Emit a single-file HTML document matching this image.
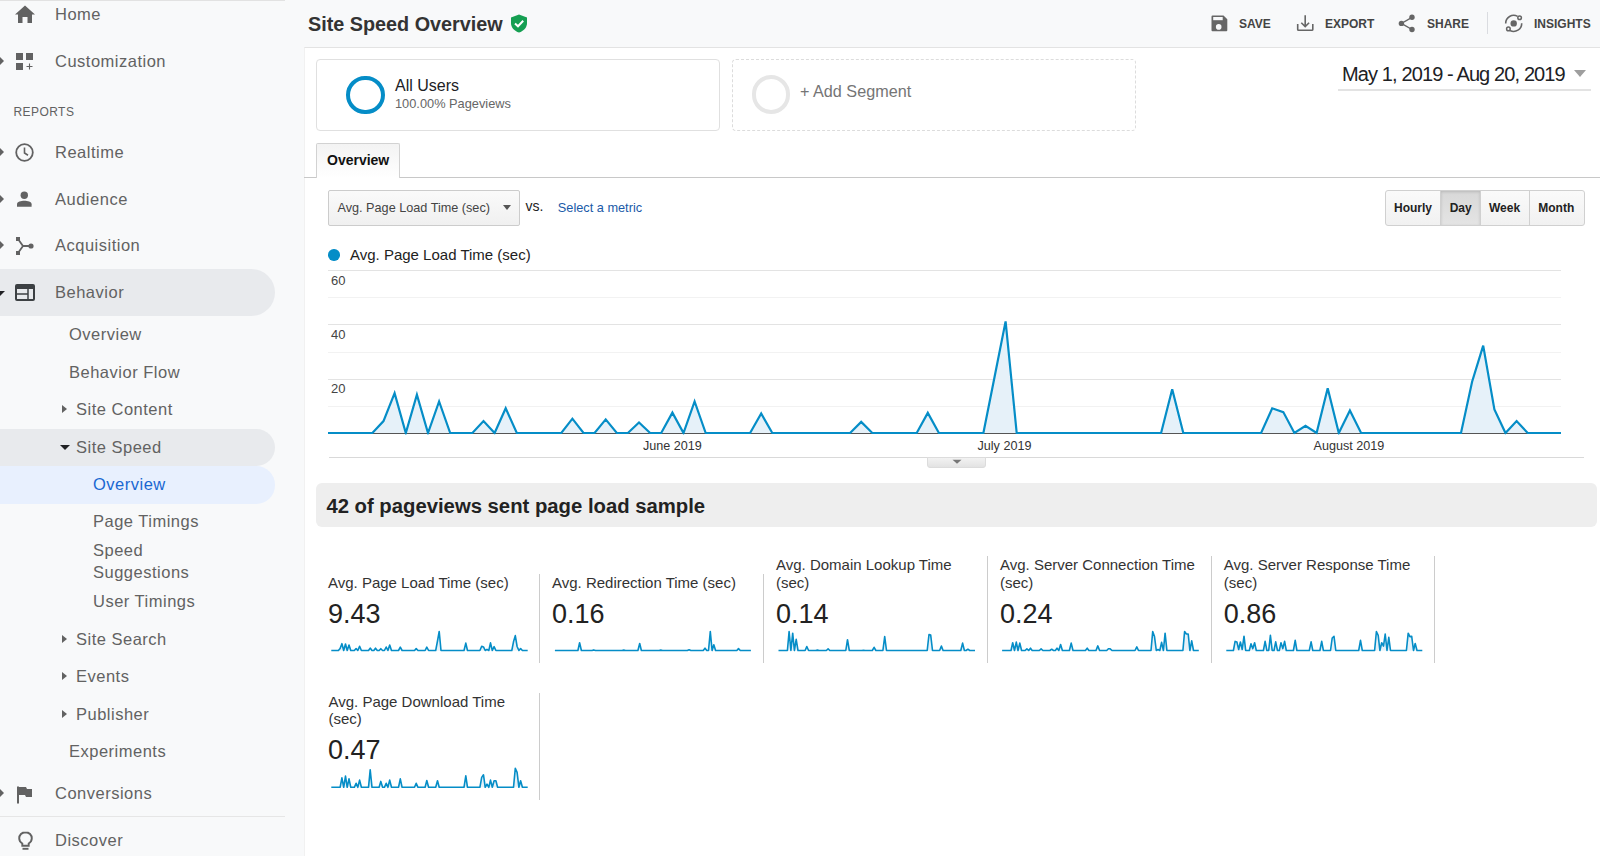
<!DOCTYPE html>
<html><head><meta charset="utf-8">
<style>
*{margin:0;padding:0;box-sizing:border-box}
html,body{width:1600px;height:856px;overflow:hidden;background:#f8f9fa;font-family:"Liberation Sans",sans-serif;position:relative}
.a{position:absolute;white-space:nowrap;line-height:1}
.nav{color:#626262;font-size:16.5px;letter-spacing:0.5px}
.sub{color:#626262;font-size:16.5px;letter-spacing:0.5px}
.arr{position:absolute;width:0;height:0;border-top:4.6px solid transparent;border-bottom:4.6px solid transparent;border-left:5.3px solid #626262}
.arr0{position:absolute;width:0;height:0;border-top:6.3px solid transparent;border-bottom:6.3px solid transparent;border-left:6px solid #626262}
.darr{position:absolute;width:0;height:0;border-left:5px solid transparent;border-right:5px solid transparent;border-top:5px solid #626262}
.ico{position:absolute}
#main{position:absolute;left:304px;top:47px;width:1296px;height:809px;background:#fff;border-top:1px solid #e3e3e3;border-left:1px solid #f1f1f1}
.tb{color:#444;font-size:12px;font-weight:bold}
.mt{color:#333;font-size:15px}
.mv{color:#222;font-size:27px}
.vd{position:absolute;width:1px;background:#ccc}
</style></head><body>
<!-- SIDEBAR -->
<div class="a" style="left:0;top:0;width:285px;height:1px;background:#e2e2e2"></div>
<svg class="ico" style="left:14px;top:5px" width="22" height="19" viewBox="0 0 22 19"><path d="M11 0.5 L21 9.5 H18 V18 H13.5 V12 H8.5 V18 H4 V9.5 H1 Z" fill="#626262"/></svg>
<div class="a nav" style="left:55px;top:5.8px">Home</div>

<div class="arr0" style="left:-2.3px;top:54.9px"></div>
<svg class="ico" style="left:16px;top:53px" width="18" height="18" viewBox="0 0 18 18"><rect x="0" y="0" width="7" height="7" fill="#626262"/><rect x="10" y="0" width="7" height="7" fill="#626262"/><rect x="0" y="10" width="7" height="7" fill="#626262"/><path d="M13.5 10.5v6M10.5 13.5h6" stroke="#626262" stroke-width="1.1"/></svg>
<div class="a nav" style="left:55px;top:52.9px">Customization</div>

<div class="a" style="left:13.4px;top:105.7px;color:#626262;font-size:12px;letter-spacing:0.45px">REPORTS</div>

<div class="arr0" style="left:-2.3px;top:146.2px"></div>
<svg class="ico" style="left:15px;top:143px" width="19" height="19" viewBox="0 0 19 19"><circle cx="9.5" cy="9.5" r="8.3" fill="none" stroke="#626262" stroke-width="1.8"/><path d="M9.5 4.5V10l3.5 2.2" fill="none" stroke="#626262" stroke-width="1.6"/></svg>
<div class="a nav" style="left:55px;top:144px">Realtime</div>

<div class="arr0" style="left:-2.3px;top:193.0px"></div>
<svg class="ico" style="left:16px;top:190px" width="18" height="18" viewBox="0 0 18 18"><circle cx="8.3" cy="5.2" r="3.7" fill="#626262"/><path d="M1 16.8 V14.2 C1 11.6 5 10.8 8.3 10.8 C11.6 10.8 15.6 11.6 15.6 14.2 V16.8 Z" fill="#626262"/></svg>
<div class="a nav" style="left:55px;top:190.8px">Audience</div>

<div class="arr0" style="left:-2.3px;top:239.4px"></div>
<svg class="ico" style="left:16px;top:237px" width="18" height="18" viewBox="0 0 18 18"><rect x="0" y="0" width="4" height="4" fill="#626262"/><rect x="0" y="14" width="4" height="4" fill="#626262"/><circle cx="15" cy="9" r="2.6" fill="#626262"/><path d="M2 2 L7 9 H15 M7 9 L2 16" fill="none" stroke="#626262" stroke-width="1.8"/></svg>
<div class="a nav" style="left:55px;top:237.2px">Acquisition</div>

<div class="a" style="left:0;top:269px;width:275px;height:47px;background:#e8eaed;border-radius:0 23.5px 23.5px 0"></div>
<div class="darr" style="left:-4.7px;top:290.5px;border-top-color:#202124"></div>
<svg class="ico" style="left:15px;top:284px" width="20" height="17" viewBox="0 0 20 17"><rect x="1" y="1" width="18" height="15" rx="1" fill="none" stroke="#3c4043" stroke-width="2"/><rect x="1" y="1" width="18" height="4" fill="#3c4043"/><path d="M1 10h12M13 5v11" stroke="#3c4043" stroke-width="1.5"/></svg>
<div class="a nav" style="left:55px;top:284.2px">Behavior</div>

<div class="a sub" style="left:69px;top:326px">Overview</div>
<div class="a sub" style="left:69px;top:363.5px">Behavior Flow</div>
<div class="arr" style="left:62px;top:405.4px"></div>
<div class="a sub" style="left:76px;top:401px">Site Content</div>

<div class="a" style="left:0;top:428.8px;width:275px;height:37.4px;background:#e8eaed;border-radius:0 18.7px 18.7px 0"></div>
<div class="darr" style="left:59.5px;top:444.5px;border-top-color:#202124"></div>
<div class="a sub" style="left:76px;top:438.5px">Site Speed</div>

<div class="a" style="left:0;top:466.2px;width:275px;height:37.4px;background:#e8f0fe;border-radius:0 18.7px 18.7px 0"></div>
<div class="a sub" style="left:93px;top:475.8px;color:#1967d2">Overview</div>
<div class="a sub" style="left:93px;top:512.9px">Page Timings</div>
<div class="a sub" style="left:93px;top:542.3px">Speed</div>
<div class="a sub" style="left:93px;top:563.5px">Suggestions</div>
<div class="a sub" style="left:93px;top:592.9px">User Timings</div>
<div class="arr" style="left:62px;top:634.9px"></div>
<div class="a sub" style="left:76px;top:630.5px">Site Search</div>
<div class="arr" style="left:62px;top:672.1px"></div>
<div class="a sub" style="left:76px;top:667.7px">Events</div>
<div class="arr" style="left:62px;top:710.0px"></div>
<div class="a sub" style="left:76px;top:705.6px">Publisher</div>
<div class="a sub" style="left:69px;top:742.7px">Experiments</div>

<div class="arr0" style="left:-2.3px;top:787.2px"></div>
<svg class="ico" style="left:17px;top:786px" width="16" height="18" viewBox="0 0 16 18"><path d="M1 0.5 V17.5" stroke="#626262" stroke-width="2"/><path d="M2 1 H9 L10 3 H15 V11 H9 L8 9 H2 Z" fill="#626262"/></svg>
<div class="a nav" style="left:55px;top:785px">Conversions</div>
<div class="a" style="left:0;top:815.5px;width:285px;height:1.5px;background:#e6e6e6"></div>
<svg class="ico" style="left:17.5px;top:831px" width="15" height="20" viewBox="0 0 15 20"><path d="M7.5 1.2 C3.8 1.2 1.2 4 1.2 7.3 C1.2 9.6 2.4 11.4 4.3 12.5 V14.8 H10.7 V12.5 C12.6 11.4 13.8 9.6 13.8 7.3 C13.8 4 11.2 1.2 7.5 1.2 Z" fill="none" stroke="#626262" stroke-width="1.9"/><path d="M4.5 17.8 H10.5" stroke="#626262" stroke-width="1.9"/></svg>
<div class="a nav" style="left:55px;top:832px">Discover</div>

<!-- HEADER -->
<div class="a" style="left:308px;top:14.8px;font-size:19.8px;font-weight:bold;color:#333">Site Speed Overview</div>
<svg class="ico" style="left:510px;top:14px" width="18" height="19" viewBox="0 0 18 19"><path d="M9 0.5 L17 3.5 V9 C17 13.5 13.6 17.2 9 18.5 C4.4 17.2 1 13.5 1 9 V3.5 Z" fill="#159f52"/><path d="M5 9.5 L8 12.3 L13.2 6.8" fill="none" stroke="#fff" stroke-width="2"/></svg>

<svg class="ico" style="left:1210.5px;top:15px" width="17" height="17" viewBox="0 0 17 17"><path d="M0.5 1.5 A1 1 0 0 1 1.5 0.5 H12.5 L16.3 4.3 V15.3 A1 1 0 0 1 15.3 16.3 H1.5 A1 1 0 0 1 0.5 15.3 Z" fill="#666"/><rect x="2.2" y="2" width="9.5" height="3.2" fill="#f8f9fa"/><circle cx="7.7" cy="11.9" r="2.8" fill="#f8f9fa"/></svg>
<div class="a tb" style="left:1239px;top:17.75px">SAVE</div>
<svg class="ico" style="left:1296px;top:14px" width="18" height="18" viewBox="0 0 18 18"><path d="M1.7 10 V15.4 Q1.7 16.3 2.6 16.3 H15.9 Q16.8 16.3 16.8 15.4 V10" fill="none" stroke="#666" stroke-width="1.6"/><path d="M9.2 1.3 V12.5 M5.3 8.7 L9.2 12.6 L13.1 8.7" fill="none" stroke="#666" stroke-width="1.6"/></svg>
<div class="a tb" style="left:1325px;top:17.75px">EXPORT</div>
<svg class="ico" style="left:1397px;top:14px" width="19" height="19" viewBox="0 0 19 19"><circle cx="15" cy="3.3" r="2.7" fill="#666"/><circle cx="4.4" cy="9.4" r="2.7" fill="#666"/><circle cx="15" cy="15.5" r="2.7" fill="#666"/><path d="M15 3.3 L4.4 9.4 L15 15.5" fill="none" stroke="#666" stroke-width="1.4"/></svg>
<div class="a tb" style="left:1427px;top:17.75px">SHARE</div>
<div class="a" style="left:1487px;top:12px;width:1px;height:22px;background:#dadce0"></div>
<svg class="ico" style="left:1504px;top:14px" width="20" height="19" viewBox="0 0 20 19"><circle cx="9.7" cy="9.4" r="3.2" fill="#666"/><path d="M1.7 9.6 A8 8 0 0 1 13.6 2.4" fill="none" stroke="#666" stroke-width="1.6"/><path d="M17.7 9.2 A8 8 0 0 1 6 16.5" fill="none" stroke="#666" stroke-width="1.6"/><circle cx="15.6" cy="3.7" r="1.8" fill="none" stroke="#666" stroke-width="1.5"/><circle cx="4.4" cy="14.9" r="1.8" fill="none" stroke="#666" stroke-width="1.5"/></svg>
<div class="a tb" style="left:1534px;top:17.75px">INSIGHTS</div>

<div id="main"></div>

<!-- SEGMENTS -->
<div class="a" style="left:316px;top:59px;width:404px;height:72px;border:1px solid #e0e0e0;border-radius:4px;background:#fff"></div>
<div class="a" style="left:346px;top:75.5px;width:38.5px;height:38.5px;border:4.8px solid #058dc7;border-radius:50%"></div>
<div class="a" style="left:395px;top:77.7px;font-size:16px;color:#202124">All Users</div>
<div class="a" style="left:395px;top:97.7px;font-size:12.8px;color:#666">100.00% Pageviews</div>

<div class="a" style="left:732px;top:59px;width:404px;height:72px;border:1px dashed #dcdcdc;border-radius:4px"></div>
<div class="a" style="left:751.5px;top:75px;width:38.5px;height:38.5px;border:4.8px solid #e6e6e6;border-radius:50%"></div>
<div class="a" style="left:800px;top:83px;font-size:16.2px;color:#757575">+ Add Segment</div>

<div class="a" style="left:1342px;top:64.4px;font-size:20px;letter-spacing:-0.88px;color:#202124">May 1, 2019 - Aug 20, 2019</div>
<div class="a" style="left:1574px;top:70px;width:0;height:0;border-left:6.5px solid transparent;border-right:6.5px solid transparent;border-top:7px solid #9e9e9e"></div>
<div class="a" style="left:1338px;top:88.5px;width:253px;height:2px;background:#e3e3e3"></div>

<!-- TAB -->
<div class="a" style="left:304px;top:177px;width:1296px;height:1px;background:#c8c8c8"></div>
<div class="a" style="left:316px;top:143px;width:84px;height:35px;border:1px solid #d2d2d2;border-bottom:none;border-radius:2px 2px 0 0;background:linear-gradient(#f3f3f3,#fff)"></div>
<div class="a" style="left:327px;top:153px;font-size:14px;font-weight:bold;color:#111">Overview</div>

<!-- CONTROLS -->
<div class="a" style="left:328px;top:190px;width:192px;height:36px;border:1px solid #ccc;border-radius:2px;background:linear-gradient(#fafafa,#f0f0f0)"></div>
<div class="a" style="left:337.5px;top:201.8px;font-size:12.66px;color:#444">Avg. Page Load Time (sec)</div>
<div class="a" style="left:502.5px;top:205px;width:0;height:0;border-left:4px solid transparent;border-right:4px solid transparent;border-top:5px solid #555"></div>
<div class="a" style="left:525.5px;top:199px;font-size:14px;color:#222">vs.</div>
<div class="a" style="left:557.8px;top:201.8px;font-size:12.75px;color:#1a5aa8">Select a metric</div>

<div class="a" style="left:1385px;top:190px;width:200px;height:36px;border:1px solid #d0d0d0;border-radius:3px;background:linear-gradient(#fafafa,#f1f1f1)"></div>
<div class="a" style="left:1440.5px;top:191px;width:39px;height:34px;background:linear-gradient(#d8d8d8,#e4e4e4);box-shadow:inset 0 1px 3px rgba(0,0,0,0.15)"></div>
<div class="a" style="left:1440px;top:191px;width:1px;height:34px;background:#d0d0d0"></div>
<div class="a" style="left:1479.5px;top:191px;width:1px;height:34px;background:#d0d0d0"></div>
<div class="a" style="left:1529px;top:191px;width:1px;height:34px;background:#d0d0d0"></div>
<div class="a" style="left:1394px;top:202.3px;font-size:12px;font-weight:bold;color:#222">Hourly</div>
<div class="a" style="left:1449.7px;top:202.3px;font-size:12px;font-weight:bold;color:#222">Day</div>
<div class="a" style="left:1489px;top:202.3px;font-size:12px;font-weight:bold;color:#222">Week</div>
<div class="a" style="left:1538.3px;top:202.3px;font-size:12px;font-weight:bold;color:#222">Month</div>

<!-- CHART -->
<div class="a" style="left:328px;top:249px;width:11.5px;height:11.5px;border-radius:50%;background:#058dc7"></div>
<div class="a" style="left:350px;top:247.4px;font-size:15px;color:#222">Avg. Page Load Time (sec)</div>
<svg class="ico" style="left:0;top:0" width="1600" height="856" viewBox="0 0 1600 856">
<g stroke-width="1" shape-rendering="crispEdges">
<path d="M328 270.5H1561M328 324.5H1561M328 379.5H1561" stroke="#e3e3e3"/>
<path d="M328 297.5H1561M328 352.5H1561M328 406.5H1561" stroke="#f2f2f2"/>
<path d="M329 457.5H1584" stroke="#d9d9d9"/>
</g>
<path d="M328.0,433.0 L339.1,433.0 L350.2,433.0 L361.3,433.0 L372.4,433.0 L383.5,421.1 L394.6,393.1 L405.8,433.0 L416.9,394.7 L428.0,433.0 L439.1,401.5 L450.2,433.0 L461.3,433.0 L472.4,433.0 L483.5,421.1 L494.6,433.0 L505.7,408.3 L516.8,433.0 L527.9,433.0 L539.1,433.0 L550.2,433.0 L561.3,433.0 L572.4,418.7 L583.5,433.0 L594.6,433.0 L605.7,419.4 L616.8,433.0 L627.9,433.0 L639.0,422.4 L650.1,433.0 L661.2,433.0 L672.4,412.6 L683.5,433.0 L694.6,401.5 L705.7,433.0 L716.8,433.0 L727.9,433.0 L739.0,433.0 L750.1,433.0 L761.2,413.5 L772.3,433.0 L783.4,433.0 L794.5,433.0 L805.6,433.0 L816.8,433.0 L827.9,433.0 L839.0,433.0 L850.1,433.0 L861.2,421.9 L872.3,433.0 L883.4,433.0 L894.5,433.0 L905.6,433.0 L916.7,433.0 L927.8,412.9 L938.9,433.0 L950.1,433.0 L961.2,433.0 L972.3,433.0 L983.4,433.0 L994.5,377.3 L1005.6,321.4 L1016.7,433.0 L1027.8,433.0 L1038.9,433.0 L1050.0,433.0 L1061.1,433.0 L1072.2,433.0 L1083.4,433.0 L1094.5,433.0 L1105.6,433.0 L1116.7,433.0 L1127.8,433.0 L1138.9,433.0 L1150.0,433.0 L1161.1,433.0 L1172.2,389.3 L1183.3,433.0 L1194.4,433.0 L1205.5,433.0 L1216.6,433.0 L1227.8,433.0 L1238.9,433.0 L1250.0,433.0 L1261.1,433.0 L1272.2,408.3 L1283.3,412.1 L1294.4,433.0 L1305.5,425.9 L1316.6,433.0 L1327.7,388.2 L1338.8,433.0 L1349.9,410.5 L1361.1,433.0 L1372.2,433.0 L1383.3,433.0 L1394.4,433.0 L1405.5,433.0 L1416.6,433.0 L1427.7,433.0 L1438.8,433.0 L1449.9,433.0 L1461.0,433.0 L1472.1,381.7 L1483.2,345.6 L1494.4,409.4 L1505.5,433.0 L1516.6,421.1 L1527.7,433.0 L1538.8,433.0 L1549.9,433.0 L1561.0,433.0 L1561.0,433.0 L328.0,433.0 Z" fill="#e6f1f9"/>
<path d="M328 433.5H1561" stroke="#555" stroke-width="1"/>
<clipPath id="cl"><rect x="300" y="250" width="1300" height="184.6"/></clipPath><path clip-path="url(#cl)" d="M328.0,433.0 L339.1,433.0 L350.2,433.0 L361.3,433.0 L372.4,433.0 L383.5,421.1 L394.6,393.1 L405.8,433.0 L416.9,394.7 L428.0,433.0 L439.1,401.5 L450.2,433.0 L461.3,433.0 L472.4,433.0 L483.5,421.1 L494.6,433.0 L505.7,408.3 L516.8,433.0 L527.9,433.0 L539.1,433.0 L550.2,433.0 L561.3,433.0 L572.4,418.7 L583.5,433.0 L594.6,433.0 L605.7,419.4 L616.8,433.0 L627.9,433.0 L639.0,422.4 L650.1,433.0 L661.2,433.0 L672.4,412.6 L683.5,433.0 L694.6,401.5 L705.7,433.0 L716.8,433.0 L727.9,433.0 L739.0,433.0 L750.1,433.0 L761.2,413.5 L772.3,433.0 L783.4,433.0 L794.5,433.0 L805.6,433.0 L816.8,433.0 L827.9,433.0 L839.0,433.0 L850.1,433.0 L861.2,421.9 L872.3,433.0 L883.4,433.0 L894.5,433.0 L905.6,433.0 L916.7,433.0 L927.8,412.9 L938.9,433.0 L950.1,433.0 L961.2,433.0 L972.3,433.0 L983.4,433.0 L994.5,377.3 L1005.6,321.4 L1016.7,433.0 L1027.8,433.0 L1038.9,433.0 L1050.0,433.0 L1061.1,433.0 L1072.2,433.0 L1083.4,433.0 L1094.5,433.0 L1105.6,433.0 L1116.7,433.0 L1127.8,433.0 L1138.9,433.0 L1150.0,433.0 L1161.1,433.0 L1172.2,389.3 L1183.3,433.0 L1194.4,433.0 L1205.5,433.0 L1216.6,433.0 L1227.8,433.0 L1238.9,433.0 L1250.0,433.0 L1261.1,433.0 L1272.2,408.3 L1283.3,412.1 L1294.4,433.0 L1305.5,425.9 L1316.6,433.0 L1327.7,388.2 L1338.8,433.0 L1349.9,410.5 L1361.1,433.0 L1372.2,433.0 L1383.3,433.0 L1394.4,433.0 L1405.5,433.0 L1416.6,433.0 L1427.7,433.0 L1438.8,433.0 L1449.9,433.0 L1461.0,433.0 L1472.1,381.7 L1483.2,345.6 L1494.4,409.4 L1505.5,433.0 L1516.6,421.1 L1527.7,433.0 L1538.8,433.0 L1549.9,433.0 L1561.0,433.0" fill="none" stroke="#058dc7" stroke-width="2.2" stroke-linejoin="miter" stroke-miterlimit="4"/>
<defs><linearGradient id="hg" x1="0" y1="0" x2="0" y2="1"><stop offset="0" stop-color="#f3f3f3"/><stop offset="1" stop-color="#e2e2e2"/></linearGradient></defs><path d="M927.5 457.5 H985.5 V465 Q985.5 467.5 983 467.5 H930 Q927.5 467.5 927.5 465 Z" fill="url(#hg)" stroke="#dcdcdc" stroke-width="1"/>
<path d="M952.5 459.8 H961.5 L957 463.8 Z" fill="#777"/>
<path d="M331.3,650.5 L333.1,650.5 L334.8,650.5 L336.6,650.5 L338.4,650.5 L340.1,648.5 L341.9,643.7 L343.7,650.5 L345.5,644.0 L347.2,650.5 L349.0,645.1 L350.8,650.5 L352.5,650.5 L354.3,650.5 L356.1,648.5 L357.8,650.5 L359.6,646.3 L361.4,650.5 L363.1,650.5 L364.9,650.5 L366.7,650.5 L368.5,650.5 L370.2,648.1 L372.0,650.5 L373.8,650.5 L375.5,648.2 L377.3,650.5 L379.1,650.5 L380.8,648.7 L382.6,650.5 L384.4,650.5 L386.2,647.0 L387.9,650.5 L389.7,645.1 L391.5,650.5 L393.2,650.5 L395.0,650.5 L396.8,650.5 L398.5,650.5 L400.3,647.2 L402.1,650.5 L403.8,650.5 L405.6,650.5 L407.4,650.5 L409.2,650.5 L410.9,650.5 L412.7,650.5 L414.5,650.5 L416.2,648.6 L418.0,650.5 L419.8,650.5 L421.5,650.5 L423.3,650.5 L425.1,650.5 L426.8,647.1 L428.6,650.5 L430.4,650.5 L432.2,650.5 L433.9,650.5 L435.7,650.5 L437.5,641.0 L439.2,631.5 L441.0,650.5 L442.8,650.5 L444.5,650.5 L446.3,650.5 L448.1,650.5 L449.8,650.5 L451.6,650.5 L453.4,650.5 L455.2,650.5 L456.9,650.5 L458.7,650.5 L460.5,650.5 L462.2,650.5 L464.0,650.5 L465.8,643.1 L467.5,650.5 L469.3,650.5 L471.1,650.5 L472.8,650.5 L474.6,650.5 L476.4,650.5 L478.2,650.5 L479.9,650.5 L481.7,646.3 L483.5,646.9 L485.2,650.5 L487.0,649.3 L488.8,650.5 L490.5,642.9 L492.3,650.5 L494.1,646.7 L495.9,650.5 L497.6,650.5 L499.4,650.5 L501.2,650.5 L502.9,650.5 L504.7,650.5 L506.5,650.5 L508.2,650.5 L510.0,650.5 L511.8,650.5 L513.5,641.8 L515.3,635.6 L517.1,646.5 L518.9,650.5 L520.6,648.5 L522.4,650.5 L524.2,650.5 L525.9,650.5 L527.7,650.5 L527.7,650.5 L331.3,650.5 Z" fill="#e6f1f8"/><path d="M331.3,650.5 L333.1,650.5 L334.8,650.5 L336.6,650.5 L338.4,650.5 L340.1,648.5 L341.9,643.7 L343.7,650.5 L345.5,644.0 L347.2,650.5 L349.0,645.1 L350.8,650.5 L352.5,650.5 L354.3,650.5 L356.1,648.5 L357.8,650.5 L359.6,646.3 L361.4,650.5 L363.1,650.5 L364.9,650.5 L366.7,650.5 L368.5,650.5 L370.2,648.1 L372.0,650.5 L373.8,650.5 L375.5,648.2 L377.3,650.5 L379.1,650.5 L380.8,648.7 L382.6,650.5 L384.4,650.5 L386.2,647.0 L387.9,650.5 L389.7,645.1 L391.5,650.5 L393.2,650.5 L395.0,650.5 L396.8,650.5 L398.5,650.5 L400.3,647.2 L402.1,650.5 L403.8,650.5 L405.6,650.5 L407.4,650.5 L409.2,650.5 L410.9,650.5 L412.7,650.5 L414.5,650.5 L416.2,648.6 L418.0,650.5 L419.8,650.5 L421.5,650.5 L423.3,650.5 L425.1,650.5 L426.8,647.1 L428.6,650.5 L430.4,650.5 L432.2,650.5 L433.9,650.5 L435.7,650.5 L437.5,641.0 L439.2,631.5 L441.0,650.5 L442.8,650.5 L444.5,650.5 L446.3,650.5 L448.1,650.5 L449.8,650.5 L451.6,650.5 L453.4,650.5 L455.2,650.5 L456.9,650.5 L458.7,650.5 L460.5,650.5 L462.2,650.5 L464.0,650.5 L465.8,643.1 L467.5,650.5 L469.3,650.5 L471.1,650.5 L472.8,650.5 L474.6,650.5 L476.4,650.5 L478.2,650.5 L479.9,650.5 L481.7,646.3 L483.5,646.9 L485.2,650.5 L487.0,649.3 L488.8,650.5 L490.5,642.9 L492.3,650.5 L494.1,646.7 L495.9,650.5 L497.6,650.5 L499.4,650.5 L501.2,650.5 L502.9,650.5 L504.7,650.5 L506.5,650.5 L508.2,650.5 L510.0,650.5 L511.8,650.5 L513.5,641.8 L515.3,635.6 L517.1,646.5 L518.9,650.5 L520.6,648.5 L522.4,650.5 L524.2,650.5 L525.9,650.5 L527.7,650.5" fill="none" stroke="#058dc7" stroke-width="1.6" stroke-linejoin="round"/>
<path d="M554.9,650.5 L556.7,650.5 L558.4,650.5 L560.2,650.5 L562.0,650.5 L563.7,650.5 L565.5,650.5 L567.3,650.5 L569.0,650.5 L570.8,650.5 L572.6,650.5 L574.3,650.5 L576.1,650.5 L577.9,650.5 L579.6,642.7 L581.4,650.5 L583.2,650.5 L584.9,650.5 L586.7,650.5 L588.4,650.5 L590.2,650.5 L592.0,650.5 L593.7,649.9 L595.5,650.5 L597.3,650.5 L599.0,650.5 L600.8,650.5 L602.6,650.5 L604.3,650.5 L606.1,650.5 L607.9,650.5 L609.6,650.5 L611.4,650.5 L613.2,650.5 L614.9,650.5 L616.7,650.5 L618.5,650.5 L620.2,650.5 L622.0,650.5 L623.8,650.1 L625.5,650.5 L627.3,650.5 L629.1,650.5 L630.8,650.5 L632.6,650.5 L634.4,650.5 L636.1,650.5 L637.9,650.5 L639.7,643.5 L641.4,650.5 L643.2,650.5 L645.0,650.5 L646.7,650.5 L648.5,650.5 L650.3,650.5 L652.0,650.5 L653.8,650.5 L655.5,650.5 L657.3,650.5 L659.1,650.5 L660.8,650.1 L662.6,650.5 L664.4,650.5 L666.1,650.5 L667.9,650.5 L669.7,650.5 L671.4,650.5 L673.2,650.5 L675.0,650.5 L676.7,650.5 L678.5,650.5 L680.3,650.5 L682.0,650.5 L683.8,650.5 L685.6,650.5 L687.3,650.5 L689.1,649.7 L690.9,650.5 L692.6,650.5 L694.4,650.5 L696.2,650.5 L697.9,650.5 L699.7,650.5 L701.5,650.5 L703.2,650.5 L705.0,648.2 L706.8,650.5 L708.5,650.5 L710.3,631.5 L712.1,650.5 L713.8,644.8 L715.6,650.5 L717.4,650.5 L719.1,650.5 L720.9,650.5 L722.6,650.5 L724.4,650.5 L726.2,650.5 L727.9,650.5 L729.7,650.5 L731.5,650.5 L733.2,650.5 L735.0,650.5 L736.8,650.5 L738.5,648.6 L740.3,650.5 L742.1,650.5 L743.8,650.5 L745.6,650.5 L747.4,650.5 L749.1,650.5 L750.9,650.5 L750.9,650.5 L554.9,650.5 Z" fill="#e6f1f8"/><path d="M554.9,650.5 L556.7,650.5 L558.4,650.5 L560.2,650.5 L562.0,650.5 L563.7,650.5 L565.5,650.5 L567.3,650.5 L569.0,650.5 L570.8,650.5 L572.6,650.5 L574.3,650.5 L576.1,650.5 L577.9,650.5 L579.6,642.7 L581.4,650.5 L583.2,650.5 L584.9,650.5 L586.7,650.5 L588.4,650.5 L590.2,650.5 L592.0,650.5 L593.7,649.9 L595.5,650.5 L597.3,650.5 L599.0,650.5 L600.8,650.5 L602.6,650.5 L604.3,650.5 L606.1,650.5 L607.9,650.5 L609.6,650.5 L611.4,650.5 L613.2,650.5 L614.9,650.5 L616.7,650.5 L618.5,650.5 L620.2,650.5 L622.0,650.5 L623.8,650.1 L625.5,650.5 L627.3,650.5 L629.1,650.5 L630.8,650.5 L632.6,650.5 L634.4,650.5 L636.1,650.5 L637.9,650.5 L639.7,643.5 L641.4,650.5 L643.2,650.5 L645.0,650.5 L646.7,650.5 L648.5,650.5 L650.3,650.5 L652.0,650.5 L653.8,650.5 L655.5,650.5 L657.3,650.5 L659.1,650.5 L660.8,650.1 L662.6,650.5 L664.4,650.5 L666.1,650.5 L667.9,650.5 L669.7,650.5 L671.4,650.5 L673.2,650.5 L675.0,650.5 L676.7,650.5 L678.5,650.5 L680.3,650.5 L682.0,650.5 L683.8,650.5 L685.6,650.5 L687.3,650.5 L689.1,649.7 L690.9,650.5 L692.6,650.5 L694.4,650.5 L696.2,650.5 L697.9,650.5 L699.7,650.5 L701.5,650.5 L703.2,650.5 L705.0,648.2 L706.8,650.5 L708.5,650.5 L710.3,631.5 L712.1,650.5 L713.8,644.8 L715.6,650.5 L717.4,650.5 L719.1,650.5 L720.9,650.5 L722.6,650.5 L724.4,650.5 L726.2,650.5 L727.9,650.5 L729.7,650.5 L731.5,650.5 L733.2,650.5 L735.0,650.5 L736.8,650.5 L738.5,648.6 L740.3,650.5 L742.1,650.5 L743.8,650.5 L745.6,650.5 L747.4,650.5 L749.1,650.5 L750.9,650.5" fill="none" stroke="#058dc7" stroke-width="1.6" stroke-linejoin="round"/>
<path d="M778.5,650.5 L780.3,650.5 L782.0,650.5 L783.8,650.5 L785.6,650.5 L787.4,650.5 L789.1,631.5 L790.9,650.5 L792.7,633.2 L794.4,650.5 L796.2,639.3 L798.0,650.5 L799.7,650.5 L801.5,650.5 L803.3,650.5 L805.1,650.5 L806.8,646.5 L808.6,650.5 L810.4,650.5 L812.1,650.5 L813.9,650.5 L815.7,650.5 L817.4,650.1 L819.2,650.5 L821.0,650.5 L822.8,650.5 L824.5,650.5 L826.3,650.5 L828.1,648.8 L829.8,650.5 L831.6,650.5 L833.4,650.5 L835.1,650.5 L836.9,650.5 L838.7,650.5 L840.5,650.5 L842.2,650.5 L844.0,650.5 L845.8,650.5 L847.5,639.7 L849.3,650.5 L851.1,650.5 L852.9,650.5 L854.6,650.5 L856.4,650.5 L858.2,650.5 L859.9,650.5 L861.7,650.5 L863.5,650.3 L865.2,650.5 L867.0,650.5 L868.8,650.5 L870.6,650.5 L872.3,650.5 L874.1,647.3 L875.9,650.5 L877.6,650.5 L879.4,650.5 L881.2,650.5 L882.9,650.5 L884.7,636.6 L886.5,650.5 L888.3,650.5 L890.0,650.5 L891.8,650.5 L893.6,650.5 L895.3,650.5 L897.1,650.5 L898.9,650.5 L900.6,650.5 L902.4,650.5 L904.2,650.5 L906.0,650.5 L907.7,650.5 L909.5,650.5 L911.3,650.5 L913.0,650.5 L914.8,650.5 L916.6,650.5 L918.4,650.5 L920.1,650.5 L921.9,650.5 L923.7,650.5 L925.4,650.5 L927.2,650.5 L929.0,634.5 L930.7,635.1 L932.5,650.5 L934.3,650.5 L936.1,650.5 L937.8,650.5 L939.6,650.5 L941.4,646.1 L943.1,650.5 L944.9,650.5 L946.7,650.5 L948.4,650.5 L950.2,650.5 L952.0,650.5 L953.8,650.5 L955.5,650.5 L957.3,650.5 L959.1,650.5 L960.8,650.5 L962.6,643.1 L964.4,650.5 L966.1,650.5 L967.9,649.2 L969.7,650.5 L971.5,650.5 L973.2,650.5 L975.0,650.5 L975.0,650.5 L778.5,650.5 Z" fill="#e6f1f8"/><path d="M778.5,650.5 L780.3,650.5 L782.0,650.5 L783.8,650.5 L785.6,650.5 L787.4,650.5 L789.1,631.5 L790.9,650.5 L792.7,633.2 L794.4,650.5 L796.2,639.3 L798.0,650.5 L799.7,650.5 L801.5,650.5 L803.3,650.5 L805.1,650.5 L806.8,646.5 L808.6,650.5 L810.4,650.5 L812.1,650.5 L813.9,650.5 L815.7,650.5 L817.4,650.1 L819.2,650.5 L821.0,650.5 L822.8,650.5 L824.5,650.5 L826.3,650.5 L828.1,648.8 L829.8,650.5 L831.6,650.5 L833.4,650.5 L835.1,650.5 L836.9,650.5 L838.7,650.5 L840.5,650.5 L842.2,650.5 L844.0,650.5 L845.8,650.5 L847.5,639.7 L849.3,650.5 L851.1,650.5 L852.9,650.5 L854.6,650.5 L856.4,650.5 L858.2,650.5 L859.9,650.5 L861.7,650.5 L863.5,650.3 L865.2,650.5 L867.0,650.5 L868.8,650.5 L870.6,650.5 L872.3,650.5 L874.1,647.3 L875.9,650.5 L877.6,650.5 L879.4,650.5 L881.2,650.5 L882.9,650.5 L884.7,636.6 L886.5,650.5 L888.3,650.5 L890.0,650.5 L891.8,650.5 L893.6,650.5 L895.3,650.5 L897.1,650.5 L898.9,650.5 L900.6,650.5 L902.4,650.5 L904.2,650.5 L906.0,650.5 L907.7,650.5 L909.5,650.5 L911.3,650.5 L913.0,650.5 L914.8,650.5 L916.6,650.5 L918.4,650.5 L920.1,650.5 L921.9,650.5 L923.7,650.5 L925.4,650.5 L927.2,650.5 L929.0,634.5 L930.7,635.1 L932.5,650.5 L934.3,650.5 L936.1,650.5 L937.8,650.5 L939.6,650.5 L941.4,646.1 L943.1,650.5 L944.9,650.5 L946.7,650.5 L948.4,650.5 L950.2,650.5 L952.0,650.5 L953.8,650.5 L955.5,650.5 L957.3,650.5 L959.1,650.5 L960.8,650.5 L962.6,643.1 L964.4,650.5 L966.1,650.5 L967.9,649.2 L969.7,650.5 L971.5,650.5 L973.2,650.5 L975.0,650.5" fill="none" stroke="#058dc7" stroke-width="1.6" stroke-linejoin="round"/>
<path d="M1002.1,650.5 L1003.9,650.5 L1005.6,650.5 L1007.4,650.5 L1009.2,650.5 L1011.0,650.5 L1012.7,642.7 L1014.5,650.5 L1016.3,642.1 L1018.0,650.5 L1019.8,643.1 L1021.6,650.5 L1023.4,650.5 L1025.1,650.5 L1026.9,648.8 L1028.7,650.5 L1030.5,648.2 L1032.2,650.5 L1034.0,650.5 L1035.8,650.5 L1037.5,650.5 L1039.3,650.5 L1041.1,648.8 L1042.9,650.5 L1044.6,650.5 L1046.4,650.5 L1048.2,650.5 L1049.9,650.5 L1051.7,649.2 L1053.5,650.5 L1055.3,650.5 L1057.0,648.2 L1058.8,650.5 L1060.6,644.6 L1062.4,650.5 L1064.1,650.5 L1065.9,650.5 L1067.7,650.5 L1069.4,650.5 L1071.2,643.1 L1073.0,650.5 L1074.8,650.5 L1076.5,650.5 L1078.3,650.5 L1080.1,650.5 L1081.8,650.5 L1083.6,650.5 L1085.4,650.5 L1087.2,648.2 L1088.9,650.5 L1090.7,650.5 L1092.5,650.5 L1094.2,650.5 L1096.0,650.5 L1097.8,645.9 L1099.6,650.5 L1101.3,650.5 L1103.1,650.5 L1104.9,650.5 L1106.7,650.5 L1108.4,648.8 L1110.2,648.8 L1112.0,650.5 L1113.7,650.5 L1115.5,650.5 L1117.3,650.5 L1119.1,650.5 L1120.8,650.5 L1122.6,650.5 L1124.4,650.5 L1126.1,650.5 L1127.9,650.5 L1129.7,650.5 L1131.5,650.5 L1133.2,650.5 L1135.0,650.5 L1136.8,646.9 L1138.5,650.5 L1140.3,650.5 L1142.1,650.5 L1143.9,650.5 L1145.6,650.5 L1147.4,650.5 L1149.2,650.5 L1151.0,650.5 L1152.7,631.5 L1154.5,636.6 L1156.3,650.5 L1158.0,649.5 L1159.8,650.5 L1161.6,642.3 L1163.4,650.5 L1165.1,633.2 L1166.9,650.5 L1168.7,650.5 L1170.4,650.5 L1172.2,650.5 L1174.0,650.5 L1175.8,650.5 L1177.5,650.5 L1179.3,650.5 L1181.1,650.5 L1182.9,650.5 L1184.6,631.5 L1186.4,634.0 L1188.2,634.0 L1189.9,650.5 L1191.7,640.8 L1193.5,650.5 L1195.3,650.5 L1197.0,650.5 L1198.8,650.5 L1198.8,650.5 L1002.1,650.5 Z" fill="#e6f1f8"/><path d="M1002.1,650.5 L1003.9,650.5 L1005.6,650.5 L1007.4,650.5 L1009.2,650.5 L1011.0,650.5 L1012.7,642.7 L1014.5,650.5 L1016.3,642.1 L1018.0,650.5 L1019.8,643.1 L1021.6,650.5 L1023.4,650.5 L1025.1,650.5 L1026.9,648.8 L1028.7,650.5 L1030.5,648.2 L1032.2,650.5 L1034.0,650.5 L1035.8,650.5 L1037.5,650.5 L1039.3,650.5 L1041.1,648.8 L1042.9,650.5 L1044.6,650.5 L1046.4,650.5 L1048.2,650.5 L1049.9,650.5 L1051.7,649.2 L1053.5,650.5 L1055.3,650.5 L1057.0,648.2 L1058.8,650.5 L1060.6,644.6 L1062.4,650.5 L1064.1,650.5 L1065.9,650.5 L1067.7,650.5 L1069.4,650.5 L1071.2,643.1 L1073.0,650.5 L1074.8,650.5 L1076.5,650.5 L1078.3,650.5 L1080.1,650.5 L1081.8,650.5 L1083.6,650.5 L1085.4,650.5 L1087.2,648.2 L1088.9,650.5 L1090.7,650.5 L1092.5,650.5 L1094.2,650.5 L1096.0,650.5 L1097.8,645.9 L1099.6,650.5 L1101.3,650.5 L1103.1,650.5 L1104.9,650.5 L1106.7,650.5 L1108.4,648.8 L1110.2,648.8 L1112.0,650.5 L1113.7,650.5 L1115.5,650.5 L1117.3,650.5 L1119.1,650.5 L1120.8,650.5 L1122.6,650.5 L1124.4,650.5 L1126.1,650.5 L1127.9,650.5 L1129.7,650.5 L1131.5,650.5 L1133.2,650.5 L1135.0,650.5 L1136.8,646.9 L1138.5,650.5 L1140.3,650.5 L1142.1,650.5 L1143.9,650.5 L1145.6,650.5 L1147.4,650.5 L1149.2,650.5 L1151.0,650.5 L1152.7,631.5 L1154.5,636.6 L1156.3,650.5 L1158.0,649.5 L1159.8,650.5 L1161.6,642.3 L1163.4,650.5 L1165.1,633.2 L1166.9,650.5 L1168.7,650.5 L1170.4,650.5 L1172.2,650.5 L1174.0,650.5 L1175.8,650.5 L1177.5,650.5 L1179.3,650.5 L1181.1,650.5 L1182.9,650.5 L1184.6,631.5 L1186.4,634.0 L1188.2,634.0 L1189.9,650.5 L1191.7,640.8 L1193.5,650.5 L1195.3,650.5 L1197.0,650.5 L1198.8,650.5" fill="none" stroke="#058dc7" stroke-width="1.6" stroke-linejoin="round"/>
<path d="M1226.3,650.5 L1228.1,650.5 L1229.8,650.5 L1231.6,650.5 L1233.4,650.5 L1235.1,641.4 L1236.9,642.0 L1238.7,649.5 L1240.4,642.0 L1242.2,649.5 L1244.0,636.2 L1245.7,650.5 L1247.5,650.5 L1249.3,650.5 L1251.0,643.7 L1252.8,648.6 L1254.6,642.7 L1256.3,650.5 L1258.1,650.5 L1259.8,650.5 L1261.6,650.5 L1263.4,650.5 L1265.1,641.4 L1266.9,650.5 L1268.7,650.5 L1270.4,635.3 L1272.2,650.5 L1274.0,650.5 L1275.7,641.8 L1277.5,650.5 L1279.3,650.5 L1281.0,642.7 L1282.8,648.6 L1284.6,641.4 L1286.3,650.5 L1288.1,650.5 L1289.9,650.5 L1291.6,650.5 L1293.4,650.5 L1295.2,640.4 L1296.9,650.5 L1298.7,650.5 L1300.5,650.5 L1302.2,650.5 L1304.0,650.5 L1305.8,650.5 L1307.5,650.5 L1309.3,650.5 L1311.1,641.8 L1312.8,650.5 L1314.6,650.5 L1316.4,650.5 L1318.1,650.5 L1319.9,650.5 L1321.7,641.4 L1323.4,650.5 L1325.2,650.5 L1326.9,650.5 L1328.7,650.5 L1330.5,650.5 L1332.2,638.0 L1334.0,636.4 L1335.8,650.5 L1337.5,650.5 L1339.3,650.5 L1341.1,650.5 L1342.8,650.5 L1344.6,650.5 L1346.4,650.5 L1348.1,650.5 L1349.9,650.5 L1351.7,650.5 L1353.4,650.5 L1355.2,650.5 L1357.0,650.5 L1358.7,650.5 L1360.5,640.4 L1362.3,650.5 L1364.0,650.5 L1365.8,650.5 L1367.6,650.5 L1369.3,650.5 L1371.1,650.5 L1372.9,650.5 L1374.6,650.5 L1376.4,631.5 L1378.2,635.3 L1379.9,650.5 L1381.7,642.7 L1383.5,646.1 L1385.2,634.0 L1387.0,650.5 L1388.8,637.4 L1390.5,650.5 L1392.3,650.5 L1394.0,650.5 L1395.8,650.5 L1397.6,650.5 L1399.3,650.5 L1401.1,650.5 L1402.9,650.5 L1404.6,650.5 L1406.4,650.5 L1408.2,633.2 L1409.9,636.6 L1411.7,636.4 L1413.5,650.5 L1415.2,643.5 L1417.0,650.5 L1418.8,650.5 L1420.5,650.5 L1422.3,650.5 L1422.3,650.5 L1226.3,650.5 Z" fill="#e6f1f8"/><path d="M1226.3,650.5 L1228.1,650.5 L1229.8,650.5 L1231.6,650.5 L1233.4,650.5 L1235.1,641.4 L1236.9,642.0 L1238.7,649.5 L1240.4,642.0 L1242.2,649.5 L1244.0,636.2 L1245.7,650.5 L1247.5,650.5 L1249.3,650.5 L1251.0,643.7 L1252.8,648.6 L1254.6,642.7 L1256.3,650.5 L1258.1,650.5 L1259.8,650.5 L1261.6,650.5 L1263.4,650.5 L1265.1,641.4 L1266.9,650.5 L1268.7,650.5 L1270.4,635.3 L1272.2,650.5 L1274.0,650.5 L1275.7,641.8 L1277.5,650.5 L1279.3,650.5 L1281.0,642.7 L1282.8,648.6 L1284.6,641.4 L1286.3,650.5 L1288.1,650.5 L1289.9,650.5 L1291.6,650.5 L1293.4,650.5 L1295.2,640.4 L1296.9,650.5 L1298.7,650.5 L1300.5,650.5 L1302.2,650.5 L1304.0,650.5 L1305.8,650.5 L1307.5,650.5 L1309.3,650.5 L1311.1,641.8 L1312.8,650.5 L1314.6,650.5 L1316.4,650.5 L1318.1,650.5 L1319.9,650.5 L1321.7,641.4 L1323.4,650.5 L1325.2,650.5 L1326.9,650.5 L1328.7,650.5 L1330.5,650.5 L1332.2,638.0 L1334.0,636.4 L1335.8,650.5 L1337.5,650.5 L1339.3,650.5 L1341.1,650.5 L1342.8,650.5 L1344.6,650.5 L1346.4,650.5 L1348.1,650.5 L1349.9,650.5 L1351.7,650.5 L1353.4,650.5 L1355.2,650.5 L1357.0,650.5 L1358.7,650.5 L1360.5,640.4 L1362.3,650.5 L1364.0,650.5 L1365.8,650.5 L1367.6,650.5 L1369.3,650.5 L1371.1,650.5 L1372.9,650.5 L1374.6,650.5 L1376.4,631.5 L1378.2,635.3 L1379.9,650.5 L1381.7,642.7 L1383.5,646.1 L1385.2,634.0 L1387.0,650.5 L1388.8,637.4 L1390.5,650.5 L1392.3,650.5 L1394.0,650.5 L1395.8,650.5 L1397.6,650.5 L1399.3,650.5 L1401.1,650.5 L1402.9,650.5 L1404.6,650.5 L1406.4,650.5 L1408.2,633.2 L1409.9,636.6 L1411.7,636.4 L1413.5,650.5 L1415.2,643.5 L1417.0,650.5 L1418.8,650.5 L1420.5,650.5 L1422.3,650.5" fill="none" stroke="#058dc7" stroke-width="1.6" stroke-linejoin="round"/>
<path d="M331.3,787.3 L333.1,787.3 L334.8,787.3 L336.6,787.3 L338.4,787.3 L340.1,787.3 L341.9,777.8 L343.7,787.3 L345.5,776.1 L347.2,787.3 L349.0,778.8 L350.8,787.3 L352.5,787.3 L354.3,787.3 L356.1,783.3 L357.8,787.3 L359.6,780.1 L361.4,787.3 L363.1,787.3 L364.9,787.3 L366.7,787.3 L368.5,787.3 L370.2,769.8 L372.0,787.3 L373.8,787.3 L375.5,787.3 L377.3,787.3 L379.1,787.3 L380.8,781.4 L382.6,787.3 L384.4,787.3 L386.2,783.3 L387.9,787.3 L389.7,780.1 L391.5,787.3 L393.2,787.3 L395.0,787.3 L396.8,787.3 L398.5,787.3 L400.3,778.8 L402.1,787.3 L403.8,787.3 L405.6,787.3 L407.4,787.3 L409.2,787.3 L410.9,787.3 L412.7,787.3 L414.5,787.3 L416.2,783.3 L418.0,787.3 L419.8,787.3 L421.5,787.3 L423.3,787.3 L425.1,787.3 L426.8,780.5 L428.6,787.3 L430.4,787.3 L432.2,787.3 L433.9,787.3 L435.7,787.3 L437.5,780.8 L439.2,787.3 L441.0,787.3 L442.8,787.3 L444.5,787.3 L446.3,787.3 L448.1,787.3 L449.8,787.3 L451.6,787.3 L453.4,787.3 L455.2,787.3 L456.9,787.3 L458.7,787.3 L460.5,787.3 L462.2,787.3 L464.0,787.3 L465.8,775.9 L467.5,787.3 L469.3,787.3 L471.1,787.3 L472.8,787.3 L474.6,787.3 L476.4,787.3 L478.2,787.3 L479.9,787.3 L481.7,777.4 L483.5,774.8 L485.2,787.3 L487.0,784.1 L488.8,787.3 L490.5,780.1 L492.3,787.3 L494.1,780.8 L495.9,780.8 L497.6,787.3 L499.4,787.3 L501.2,787.3 L502.9,787.3 L504.7,787.3 L506.5,787.3 L508.2,787.3 L510.0,787.3 L511.8,787.3 L513.5,787.3 L515.3,768.3 L517.1,772.3 L518.9,787.3 L520.6,780.8 L522.4,787.3 L524.2,787.3 L525.9,787.3 L527.7,787.3 L527.7,787.3 L331.3,787.3 Z" fill="#e6f1f8"/><path d="M331.3,787.3 L333.1,787.3 L334.8,787.3 L336.6,787.3 L338.4,787.3 L340.1,787.3 L341.9,777.8 L343.7,787.3 L345.5,776.1 L347.2,787.3 L349.0,778.8 L350.8,787.3 L352.5,787.3 L354.3,787.3 L356.1,783.3 L357.8,787.3 L359.6,780.1 L361.4,787.3 L363.1,787.3 L364.9,787.3 L366.7,787.3 L368.5,787.3 L370.2,769.8 L372.0,787.3 L373.8,787.3 L375.5,787.3 L377.3,787.3 L379.1,787.3 L380.8,781.4 L382.6,787.3 L384.4,787.3 L386.2,783.3 L387.9,787.3 L389.7,780.1 L391.5,787.3 L393.2,787.3 L395.0,787.3 L396.8,787.3 L398.5,787.3 L400.3,778.8 L402.1,787.3 L403.8,787.3 L405.6,787.3 L407.4,787.3 L409.2,787.3 L410.9,787.3 L412.7,787.3 L414.5,787.3 L416.2,783.3 L418.0,787.3 L419.8,787.3 L421.5,787.3 L423.3,787.3 L425.1,787.3 L426.8,780.5 L428.6,787.3 L430.4,787.3 L432.2,787.3 L433.9,787.3 L435.7,787.3 L437.5,780.8 L439.2,787.3 L441.0,787.3 L442.8,787.3 L444.5,787.3 L446.3,787.3 L448.1,787.3 L449.8,787.3 L451.6,787.3 L453.4,787.3 L455.2,787.3 L456.9,787.3 L458.7,787.3 L460.5,787.3 L462.2,787.3 L464.0,787.3 L465.8,775.9 L467.5,787.3 L469.3,787.3 L471.1,787.3 L472.8,787.3 L474.6,787.3 L476.4,787.3 L478.2,787.3 L479.9,787.3 L481.7,777.4 L483.5,774.8 L485.2,787.3 L487.0,784.1 L488.8,787.3 L490.5,780.1 L492.3,787.3 L494.1,780.8 L495.9,780.8 L497.6,787.3 L499.4,787.3 L501.2,787.3 L502.9,787.3 L504.7,787.3 L506.5,787.3 L508.2,787.3 L510.0,787.3 L511.8,787.3 L513.5,787.3 L515.3,768.3 L517.1,772.3 L518.9,787.3 L520.6,780.8 L522.4,787.3 L524.2,787.3 L525.9,787.3 L527.7,787.3" fill="none" stroke="#058dc7" stroke-width="1.6" stroke-linejoin="round"/>
</svg>
<div class="a" style="left:331px;top:273.9px;font-size:13px;color:#444">60</div>
<div class="a" style="left:331px;top:327.9px;font-size:13px;color:#444">40</div>
<div class="a" style="left:331px;top:382px;font-size:13px;color:#444">20</div>
<div class="a" style="left:643px;top:439.9px;font-size:12.6px;color:#333">June 2019</div>
<div class="a" style="left:977.5px;top:439.9px;font-size:12.6px;color:#333">July 2019</div>
<div class="a" style="left:1313.5px;top:439.9px;font-size:12.6px;color:#333">August 2019</div>

<!-- SECTION -->
<div class="a" style="left:316px;top:483px;width:1281px;height:44px;background:#eeeeee;border-radius:6px"></div>
<div class="a" style="left:326.4px;top:496.4px;font-size:20.3px;font-weight:bold;color:#222">42 of pageviews sent page load sample</div>

<!-- CARDS -->
<div class="vd" style="left:539px;top:574px;height:89px"></div>
<div class="vd" style="left:763px;top:574px;height:89px"></div>
<div class="vd" style="left:986.5px;top:556px;height:107px"></div>
<div class="vd" style="left:1210.5px;top:556px;height:107px"></div>
<div class="vd" style="left:1434px;top:556px;height:107px"></div>
<div class="vd" style="left:539px;top:692.5px;height:107px"></div>

<div class="a mt" style="left:328px;top:574.9px">Avg. Page Load Time (sec)</div>
<div class="a mv" style="left:328px;top:601.2px">9.43</div>
<div class="a mt" style="left:552px;top:574.9px">Avg. Redirection Time (sec)</div>
<div class="a mv" style="left:552px;top:601.2px">0.16</div>
<div class="a mt" style="left:776px;top:557px">Avg. Domain Lookup Time</div>
<div class="a mt" style="left:776px;top:575px">(sec)</div>
<div class="a mv" style="left:776px;top:601.2px">0.14</div>
<div class="a mt" style="left:1000px;top:557px">Avg. Server Connection Time</div>
<div class="a mt" style="left:1000px;top:575px">(sec)</div>
<div class="a mv" style="left:1000px;top:601.2px">0.24</div>
<div class="a mt" style="left:1223.8px;top:557px">Avg. Server Response Time</div>
<div class="a mt" style="left:1223.8px;top:575px">(sec)</div>
<div class="a mv" style="left:1223.8px;top:601.2px">0.86</div>
<div class="a mt" style="left:328.5px;top:694px">Avg. Page Download Time</div>
<div class="a mt" style="left:328.5px;top:710.8px">(sec)</div>
<div class="a mv" style="left:328px;top:737.3px">0.47</div>

</body></html>
